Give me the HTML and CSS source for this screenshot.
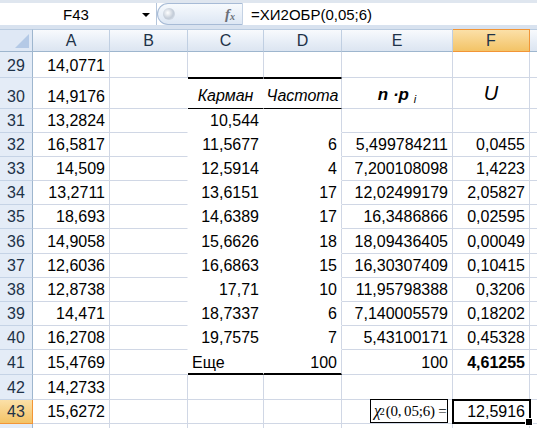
FILE: index.html
```html
<!DOCTYPE html>
<html lang="ru">
<head>
  <meta charset="UTF-8" />
  <title>ХИ2ОБР</title>
  <link rel="stylesheet" href="styles.css">
</head>
<body>
  <div class="fbar">
    <div class="namebox">
      <span class="name">F43</span>
      <span class="drop"></span>
    </div>
    <div class="fxbox">
      <span class="knob"></span>
      <span class="fx">f<sub>x</sub></span>
    </div>
    <div class="formula">=ХИ2ОБР(0,05;6)</div>
  </div>

  <div class="sheet">
    <!-- column headers -->
    <div class="corner"><span class="tri"></span></div>
    <div class="ch">A</div><div class="ch">B</div><div class="ch">C</div><div class="ch">D</div>
    <div class="ch">E</div><div class="ch sel">F</div><div class="ch"></div>

    <!-- 29 -->
    <div class="rh">29</div><div class="c">14,0771</div><div class="c"></div>
    <div class="c above"></div><div class="c above"></div><div class="c"></div><div class="c"></div><div class="c"></div>

    <!-- 30 -->
    <div class="rh">30</div><div class="c">14,9176</div><div class="c bx"></div>
    <div class="c head hc">Карман</div><div class="c head">Частота</div>
    <div class="c mid"><span class="np">n ·p <sub>i</sub></span></div>
    <div class="c mid"><span class="u">U</span></div><div class="c"></div>

    <!-- 31 -->
    <div class="rh">31</div><div class="c">13,2824</div><div class="c bx"></div>
    <div class="c tc">10,544</div><div class="c td"></div><div class="c"></div><div class="c"></div><div class="c"></div>

    <div class="rh">32</div><div class="c">16,5817</div><div class="c bx"></div>
    <div class="c tc">11,5677</div><div class="c td">6</div><div class="c">5,499784211</div><div class="c">0,0455</div><div class="c"></div>

    <div class="rh">33</div><div class="c">14,509</div><div class="c bx"></div>
    <div class="c tc">12,5914</div><div class="c td">4</div><div class="c">7,200108098</div><div class="c">1,4223</div><div class="c"></div>

    <div class="rh">34</div><div class="c">13,2711</div><div class="c bx"></div>
    <div class="c tc">13,6151</div><div class="c td">17</div><div class="c">12,02499179</div><div class="c">2,05827</div><div class="c"></div>

    <div class="rh">35</div><div class="c">18,693</div><div class="c bx"></div>
    <div class="c tc">14,6389</div><div class="c td">17</div><div class="c">16,3486866</div><div class="c">0,02595</div><div class="c"></div>

    <div class="rh">36</div><div class="c">14,9058</div><div class="c bx"></div>
    <div class="c tc">15,6626</div><div class="c td">18</div><div class="c">18,09436405</div><div class="c">0,00049</div><div class="c"></div>

    <div class="rh">37</div><div class="c">12,6036</div><div class="c bx"></div>
    <div class="c tc">16,6863</div><div class="c td">15</div><div class="c">16,30307409</div><div class="c">0,10415</div><div class="c"></div>

    <div class="rh">38</div><div class="c">12,8738</div><div class="c bx"></div>
    <div class="c tc">17,71</div><div class="c td">10</div><div class="c">11,95798388</div><div class="c">0,3206</div><div class="c"></div>

    <div class="rh">39</div><div class="c">14,471</div><div class="c bx"></div>
    <div class="c tc">18,7337</div><div class="c td">6</div><div class="c">7,140005579</div><div class="c">0,18202</div><div class="c"></div>

    <div class="rh">40</div><div class="c">16,2708</div><div class="c bx"></div>
    <div class="c tc">19,7575</div><div class="c td">7</div><div class="c">5,43100171</div><div class="c">0,45328</div><div class="c"></div>

    <!-- 41 -->
    <div class="rh">41</div><div class="c">15,4769</div><div class="c bx"></div>
    <div class="c tc last l">Еще</div><div class="c td last">100</div><div class="c">100</div><div class="c b">4,61255</div><div class="c"></div>

    <div class="rh">42</div><div class="c">14,2733</div><div class="c"></div>
    <div class="c"></div><div class="c"></div><div class="c"></div><div class="c"></div><div class="c"></div>

    <!-- 43 -->
    <div class="rh sel">43</div><div class="c">15,6272</div><div class="c"></div>
    <div class="c"></div><div class="c"></div>
    <div class="c eq-cell"><div class="eq"><i>χ</i><sup>2</sup>(0,&#8201;05;6) =</div></div>
    <div class="c active">12,5916<span class="frame"></span><span class="handle"></span></div>
    <div class="c"></div>

    <div class="rh"></div><div class="c"></div><div class="c"></div><div class="c"></div>
    <div class="c"></div><div class="c"></div><div class="c"></div><div class="c"></div>
  </div>
</body>
</html>
```

FILE: styles.css
```css
body {
  margin: 0;
  width: 537px;
  height: 428px;
  overflow: hidden;
  background: #fff;
  font-family: "Liberation Sans", Arial, sans-serif;
  font-size: 16px;
  color: #000;
}

/* FORMULA BAR */
.fbar {
  height: 29px;
  box-sizing: border-box;
  display: flex;
  background: #fff;
  border-top: 3px solid #dfe6ef;
  border-bottom: 4px solid #d8e2ef;
}
.namebox {
  width: 156px;
  display: flex;
  align-items: center;
  border-right: 1px solid #b5c6dc;
}
.name {
  flex: 1;
  text-align: center;
  font-size: 15px;
  padding-left: 10px;
}
.drop {
  width: 0;
  height: 0;
  border-left: 4px solid transparent;
  border-right: 4px solid transparent;
  border-top: 4px solid #000;
  margin: 2px 6px 0 0;
}
.fxbox {
  width: 86px;
  display: flex;
  align-items: center;
  justify-content: space-between;
  background: linear-gradient(#f7fafd, #dde7f4);
  border: 1px solid #a7bbd6;
  border-right-color: #c4d2e4;
  border-radius: 11px 0 0 11px;
  box-sizing: border-box;
}
.knob {
  width: 12px;
  height: 12px;
  margin-left: 5px;
  border-radius: 50%;
  background: radial-gradient(circle at 40% 40%, #fff 0, #c3ccd8 55%, #e7edf5 100%);
}
.fx {
  font-family: "Liberation Serif", serif;
  font-style: italic;
  font-weight: bold;
  font-size: 15px;
  color: #6a6f78;
  margin-right: 7px;
}
.fx sub {
  font-size: 10px;
  vertical-align: -1px;
}
.formula {
  flex: 1;
  display: flex;
  align-items: center;
  padding-left: 8px;
  font-size: 15px;
}

/* SHEET GRID */
.sheet {
  display: grid;
  grid-template-columns: 33px 77px 78px 76px 78px 111px 77px 1fr;
  grid-template-rows: 23px 26px 31px 24px 24px 24px 24px 24px 25px 24px 24px 24px 24px 25px 25px 24px 24px;
}
.sheet > div {
  box-sizing: border-box;
}
.corner {
  position: relative;
  background: #dfe8f5;
  border-right: 1px solid #9eb6ce;
  border-bottom: 1px solid #9eb6ce;
  border-top: 1px solid #b9cbe0;
}
.tri {
  position: absolute;
  right: 3px;
  bottom: 3px;
  width: 0;
  height: 0;
  border-left: 14px solid transparent;
  border-bottom: 14px solid #b4c9e6;
}
.ch {
  display: flex;
  align-items: center;
  justify-content: center;
  background: linear-gradient(#f8fafd, #e6edf6 60%, #dce5f1);
  border-right: 1px solid #c0cfe2;
  border-bottom: 1px solid #9eb6ce;
  border-top: 1px solid #b9cbe0;
  color: #1e3248;
}
.ch.sel,
.rh.sel {
  background: linear-gradient(#fbe0a8, #f3c366);
  border-color: #f29536;
  border-right-color: #f29536;
}
.rh {
  display: flex;
  align-items: flex-end;
  justify-content: center;
  padding-bottom: 2px;
  background: #e4ecf7;
  border-right: 1px solid #9eb6ce;
  border-bottom: 1px solid #c5d3e6;
  color: #1e3248;
}
.c {
  display: flex;
  align-items: flex-end;
  justify-content: flex-end;
  padding: 0 4px 2px;
  white-space: nowrap;
  border-right: 1px solid #d0d7e5;
  border-bottom: 1px solid #d0d7e5;
}
.c.l {
  justify-content: flex-start;
  padding-left: 4px;
}
.c.b {
  font-weight: bold;
}

/* table C30:D41 - white fill, hand-drawn borders */
.bx {
  border-right-color: #fff !important;
}
.above {
  border-bottom-color: #000;
}
.head {
  justify-content: center;
  font-style: italic;
  border-top: 1px solid #000;
  border-bottom-color: #000;
  padding: 0 0 3px;
}
.hc,
.tc {
  border-right-color: #fff;
}
.tc,
.td {
  border-bottom-color: #fff;
}
.c.last {
  border-bottom: 2px solid #000;
  padding-bottom: 1px;
}
.mid {
  justify-content: center;
  padding-bottom: 3px;
}
.np {
  font-style: italic;
  font-weight: bold;
  font-size: 17px;
}
.np sub {
  font-weight: normal;
  font-size: 11px;
  vertical-align: -3px;
}
.u {
  font-style: italic;
  font-size: 20px;
}

/* E43 equation object and F43 selection */
.eq-cell,
.active {
  position: relative;
}
.eq {
  position: absolute;
  left: 28px;
  top: -1px;
  width: 78px;
  height: 24px;
  box-sizing: border-box;
  border: 1px solid #000;
  background: #fff;
  font-family: "Liberation Serif", serif;
  font-size: 15px;
  letter-spacing: -0.2px;
  display: flex;
  align-items: center;
  padding-left: 3px;
  white-space: nowrap;
  overflow: hidden;
}
.eq i {
  font-size: 16px;
}
.eq sup {
  font-size: 10px;
  vertical-align: 6px;
  margin: 0 1px 0 -1px;
}
.frame {
  position: absolute;
  left: -1px;
  top: -1px;
  right: -2px;
  bottom: -1px;
  border: 2px solid #000;
}
.handle {
  position: absolute;
  right: -4px;
  bottom: -3px;
  width: 6px;
  height: 6px;
  background: #000;
  border: 1px solid #fff;
}
```
